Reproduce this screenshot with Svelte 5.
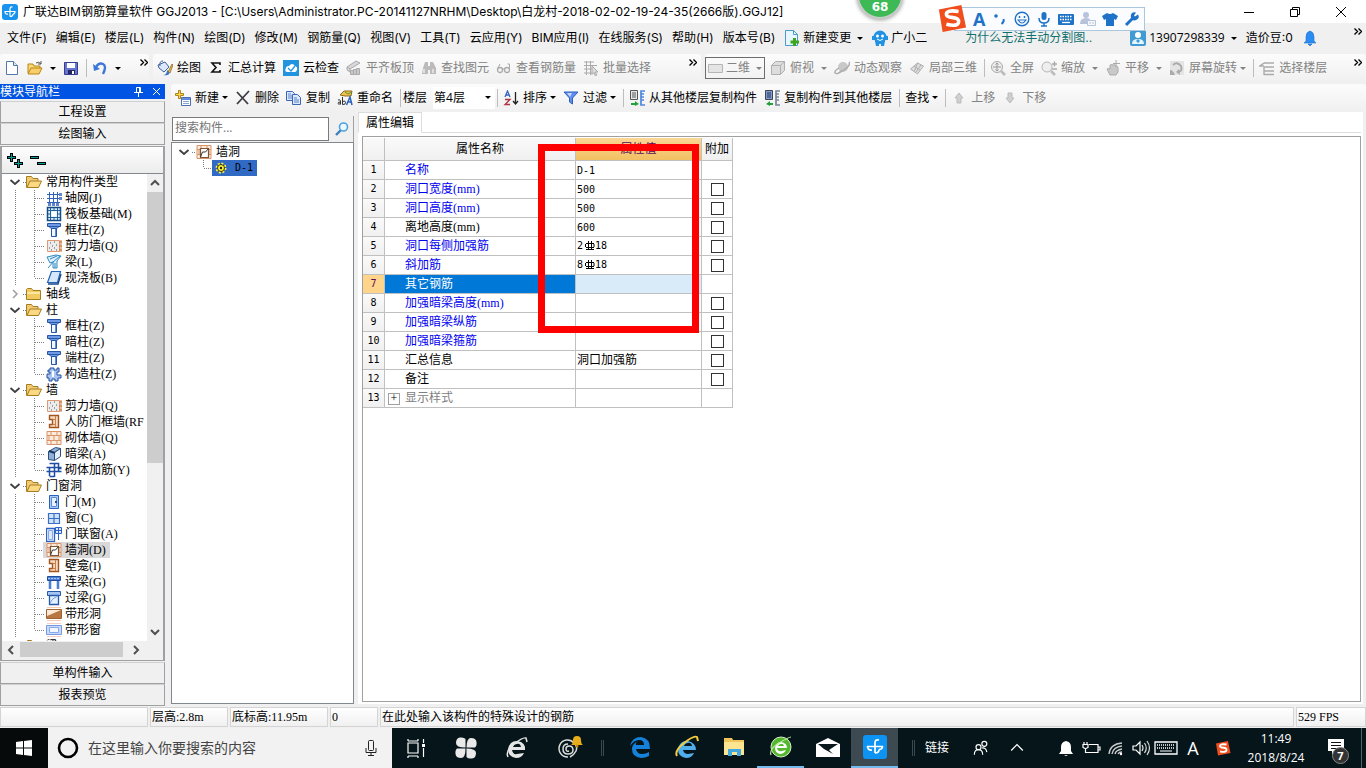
<script lang="ts">
	interface Tool {
		icon?: string;
		text?: string;
		arrow?: 'wide' | 'tight';
		sep?: boolean;
		off?: boolean;
		boxed?: boolean;
	}

	interface Prop {
		name: string;
		color?: string;
		value?: string;
		bar?: string[];
		check?: boolean;
	}

	const menus = ['文件(F)', '编辑(E)', '楼层(L)', '构件(N)', '绘图(D)', '修改(M)', '钢筋量(Q)', '视图(V)', '工具(T)', '云应用(Y)', 'BIM应用(I)', '在线服务(S)', '帮助(H)', '版本号(B)'];

	const drawTools: Tool[] = [
		{ icon: 'paint', text: '绘图' },
		{ icon: 'sum', text: '汇总计算' },
		{ icon: 'cloud', text: '云检查' },
		{ icon: 'align', text: '平齐板顶', off: true },
		{ icon: 'find', text: '查找图元', off: true },
		{ icon: 'glasses', text: '查看钢筋量', off: true },
		{ icon: 'batch', text: '批量选择', off: true }
	];

	const viewTools: Tool[] = [
		{ icon: 'rect', text: '二维', arrow: 'wide', off: true, boxed: true },
		{ icon: 'cube', text: '俯视', arrow: 'wide', off: true },
		{ icon: 'orbit', text: '动态观察', off: true },
		{ icon: 'part', text: '局部三维', off: true },
		{ sep: true },
		{ icon: 'full', text: '全屏', off: true },
		{ icon: 'zoom', text: '缩放', arrow: 'wide', off: true },
		{ icon: 'pan', text: '平移', arrow: 'wide', off: true },
		{ icon: 'rotate', text: '屏幕旋转', arrow: 'tight', off: true },
		{ sep: true },
		{ icon: 'floor', text: '选择楼层', off: true }
	];

	const editTools: Tool[] = [
		{ icon: 'add', text: '新建', arrow: 'tight' },
		{ icon: 'del', text: '删除' },
		{ icon: 'copy', text: '复制' },
		{ icon: 'rename', text: '重命名' },
		{ sep: true }
	];

	const floorTools: Tool[] = [
		{ sep: true },
		{ icon: 'sort', text: '排序', arrow: 'tight' },
		{ icon: 'filter', text: '过滤', arrow: 'tight' },
		{ sep: true },
		{ icon: 'copyfrom', text: '从其他楼层复制构件' },
		{ icon: 'copyto', text: '复制构件到其他楼层' },
		{ sep: true },
		{ text: '查找', arrow: 'tight' },
		{ sep: true },
		{ icon: 'up', text: '上移', off: true },
		{ icon: 'down', text: '下移', off: true }
	];

	const tree = [
		{ name: '常用构件类型', open: true, items: [['grid', '轴网(J)'], ['raft', '筏板基础(M)'], ['column', '框柱(Z)'], ['wall', '剪力墙(Q)'], ['beam', '梁(L)'], ['slab', '现浇板(B)']] },
		{ name: '轴线', open: false, items: [] },
		{ name: '柱', open: true, items: [['column', '框柱(Z)'], ['column', '暗柱(Z)'], ['column', '端柱(Z)'], ['tiecol', '构造柱(Z)']] },
		{ name: '墙', open: true, items: [['wall', '剪力墙(Q)'], ['niche', '人防门框墙(RF'], ['brick', '砌体墙(Q)'], ['hidden', '暗梁(A)'], ['rebarwall', '砌体加筋(Y)']] },
		{ name: '门窗洞', open: true, items: [['door', '门(M)'], ['window', '窗(C)'], ['doorwin', '门联窗(A)'], ['hole', '墙洞(D)'], ['niche', '壁龛(I)'], ['link', '连梁(G)'], ['lintel', '过梁(G)'], ['strip', '带形洞'], ['stripwin', '带形窗']] },
		{ name: '梁', open: false, items: [] }
	];

	let props: Prop[] = $state([
		{ name: '名称', color: 'blue', value: 'D-1' },
		{ name: '洞口宽度(mm)', color: 'blue', value: '500', check: false },
		{ name: '洞口高度(mm)', color: 'blue', value: '500', check: false },
		{ name: '离地高度(mm)', value: '600', check: false },
		{ name: '洞口每侧加强筋', color: 'blue', bar: ['2', '18'], check: false },
		{ name: '斜加筋', color: 'blue', bar: ['8', '18'], check: false },
		{ name: '其它钢筋' },
		{ name: '加强暗梁高度(mm)', color: 'blue', check: false },
		{ name: '加强暗梁纵筋', color: 'blue', check: false },
		{ name: '加强暗梁箍筋', color: 'blue', check: false },
		{ name: '汇总信息', value: '洞口加强筋', check: false },
		{ name: '备注', check: false },
		{ name: '显示样式', color: 'gray' }
	]);

	let selectedRow = $state(6);
	let selectedItem = $state('墙洞(D)');
	let search = $state('');
	let taskSearch = $state('');

	const bricks = '<path d="M1 1.500h14v13H1zM1 5.500h14M1 10.500h14M5 1.500v4M11 1.500v4M8 5.500v5M3 5.500v5M13 5.500v5M5 10.500v4M11 10.500v4" fill="#fdebdc" stroke="#d9936a"/>';

	const icons: Record<string, string> = {
		logo: '<rect width="16" height="16" rx="3" fill="#1a93ee"/><path d="M8 12.500V5q0-2.500 2.500-2M2.500 7.500h11M3 7.500q0 3 3 2.500M8 12.500q3 0 3-2.500M13 7.500q0 2.500-2 2.500" fill="none" stroke="#fff" stroke-width="1.200"/>',
		file: '<path d="M2.500 1.500h7l4 4v9h-11z" fill="#fff" stroke="#5377a8"/><path d="M9.500 1.500v4h4" fill="#dbe8fa" stroke="#5377a8"/>',
		open: '<path d="M1 13V4h5l1 2h6v2" fill="#f7d977" stroke="#b98414"/><path d="M1 14l3-6h11l-3 6z" fill="#f9cf6c" stroke="#b98414"/><path d="M9 3q3-2 5 1M14 1v3h-3" fill="none" stroke="#555"/>',
		save: '<path d="M1.500 2.500h13v12h-13z" fill="#6675cf" stroke="#353b93"/><path d="M4 3h8v5H4z" fill="#fff"/><path d="M5 10h7v4H5z" fill="#24275f"/><path d="M9 11h2v3H9z" fill="#fff"/>',
		undo: '<path d="M4 7q3-5 7-3t0 10" fill="none" stroke="#3d78d8" stroke-width="2.400"/><path d="M1 4l1 7 6-2z" fill="#3d78d8"/>',
		paint: '<path d="M1 5l7-3 4 5-5 5-5-4z" fill="#dbe8fb" stroke="#43609a"/><path d="M3 6q-1-5 3-5" fill="none" stroke="#43609a"/><path d="M11 12l4-8 1 1-3 8z" fill="#f1bb3c" stroke="#7a5d19" stroke-width=".7"/><path d="M6 15q4 0 4-5 3 2 2 4t-6 1z" fill="#3f74c8"/>',
		sum: '<path d="M12 5V3H4l4 4.500L4 12h8v-2" fill="none" stroke="#111" stroke-width="1.600"/>',
		cloud: '<rect width="16" height="16" fill="#2294df"/><path d="M4 12q-3-1-1-4 0-2 3-2 3-4 6 0 3 1 2 4-1 2-2 2z" fill="#fff"/><path d="M5 8l3 3 4-5" fill="none" stroke="#2294df" stroke-width="1.300"/>',
		align: '<path d="M1 7l9-6 4 2-10 6zM1 7v3l3 2V9" fill="#d8d8d8" stroke="#aaa"/><path d="M4.500 10.500h3v4h-3zM7.500 9.500h3v5h-3zM10.500 8.500h3v6h-3z" fill="#c8c8c8" stroke="#aaa"/>',
		find: '<path d="M2 8l2-6h3v12H1zM9 14V2h3l3 6v6zM7 6h2v4H7z" fill="#bbb"/><path d="M3 9v4M12 9v4" stroke="#eee" stroke-width="1.400"/>',
		glasses: '<circle cx="4" cy="10" r="2.500" fill="none" stroke="#aaa" stroke-width="1.300"/><circle cx="11" cy="10" r="2.500" fill="none" stroke="#aaa" stroke-width="1.300"/><path d="M1.500 9L4 4M6.500 9h2M13.500 9V4h-2" fill="none" stroke="#aaa"/>',
		batch: '<path d="M1 2h10M1 5.500h13M1 9h8M1 13h8M3.500 1v14M7.500 1v14" stroke="#aaa"/><path d="M9 6l6 6h-3l2 3-2 .5-1-3-2 2z" fill="#ddd" stroke="#aaa"/>',
		rect: '<path d="M1.500 4.500h14v8h-14z" fill="#e4e4e4" stroke="#b5b5b5"/>',
		cube: '<path d="M1.500 5.500l4-4h9v9l-4 4h-9zM1.500 5.500h9v9M10.500 5.500l4-4" fill="#ddd" stroke="#b0b0b0"/>',
		orbit: '<circle cx="9" cy="7" r="5" fill="#c8c8c8"/><path d="M15 2q2 3-5 8t-9 3q-1-2 4-5" fill="none" stroke="#aaa" stroke-width="1.400"/><path d="M3 14l5-4" stroke="#aaa"/>',
		part: '<path d="M1.500 9l7-6 6 3-6 8zM5 6l6 4M8.500 3l-3 8M12 5l-5 7" fill="#ddd" stroke="#b0b0b0"/>',
		full: '<circle cx="7" cy="7" r="5.500" fill="#eee" stroke="#aaa"/><path d="M7 3v8M3 7h8M5.500 4.500L7 3l1.500 1.500M5.500 9.500L7 11l1.500-1.500" fill="none" stroke="#999"/><path d="M11 11l4 4" stroke="#bbb" stroke-width="2.500"/>',
		zoom: '<circle cx="6" cy="7" r="5" fill="#eee" stroke="#b5b5b5"/><path d="M10 11l4 4" stroke="#bbb" stroke-width="2.500"/><path d="M11 4h5M13.500 1.500v5M11 9h5" stroke="#aaa" stroke-width="1.400"/>',
		pan: '<path d="M2 9q2-1 3 0V5q2-1 3 0 2-1 3 1 2 0 2 2v4l-2 3H5z" fill="#c9c9c9" stroke="#aaa"/><path d="M11 0v7M8 3.500h7" stroke="#aaa"/>',
		rotate: '<path d="M1 1h14v14H1z" fill="#e4e4e4"/><path d="M4 5q4-4 8 1 2 5-3 6" fill="none" stroke="#aaa" stroke-width="2"/><path d="M10 9l-3 3 4 3zM1 15V10q3 0 5 5z" fill="#aaa"/>',
		floor: '<path d="M5 3h10M5 7h10M5 11h10M5 14.500h10M5 3L1 6h4M5 7v8" fill="none" stroke="#aaa" stroke-width="1.400"/>',
		add: '<path d="M3.500 0.500h2v3h3v2h-3v3h-2v-3h-3v-2h3z" fill="#f9d64a" stroke="#a9841a"/><path d="M6.500 7.500h9v8h-9z" fill="#fff" stroke="#4f6fb5"/><path d="M7 8h8v2H7z" fill="#5f8be0"/><path d="M8 11.500h6M8 13.500h6" stroke="#8aa5d8"/>',
		del: '<path d="M2 2l11 12M14 1L2 14" stroke="#3c3c44" stroke-width="1.800"/>',
		copy: '<path d="M.5 1.500h6l2 2v7h-8z" fill="#dce8ff" stroke="#3b66b0"/><path d="M6.500 4.500h5l3 3v7h-8z" fill="#dce8ff" stroke="#3b66b0"/><path d="M8 8h3M8 10h5M8 12h5M2 4h3M2 6h4M2 8h4" stroke="#5a83c8"/>',
		rename: '<path d="M3 5l4-4h8l-1 5H8z" fill="#efc34c" stroke="#8d6b1c"/><path d="M8 2l3 2 4-2" fill="none" stroke="#5c8a3a"/><path d="M9.500 15l3.500-8 2 8M11 12h4" fill="none" stroke="#2a62c0" stroke-width="1.500"/><path d="M1 10q2-1 2.500 1v3.500M3.500 12q-3 0-2.500 1.500t2.500 0M5.500 7v7.500q3 .5 3-2t-3-1" fill="none" stroke="#333"/>',
		sort: '<path d="M2 7l2.500-6L7 7M3 5h3" fill="none" stroke="#3765bf" stroke-width="1.300"/><path d="M2 9.500h5l-5 5h5" fill="none" stroke="#b03544" stroke-width="1.300"/><path d="M12.500 2v12M10 11l2.500 3 2.500-3" fill="none" stroke="#222" stroke-width="1.300"/>',
		filter: '<path d="M1 2h14l-5.500 6v6L6.500 12V8z" fill="#5d8ff0" stroke="#2f5ec0"/><path d="M4 3h5l-2 4z" fill="#c8dbff"/>',
		copyfrom: '<path d="M1.500.5h7v9h-7z" fill="#e8e8e8" stroke="#555"/><path d="M3 3h4M3 5h4M3 7h4" stroke="#555"/><path d="M16 1h-4v14h4M15 4h-3M15 7h-3M15 10h-3" fill="none" stroke="#4f86dd" stroke-width="1.700"/><path d="M2 11v2h4v-2l4 3-4 2v-1H2z" fill="#24a03a"/>',
		copyto: '<path d="M1.500.5h7v9h-7z" fill="#7f9fdc" stroke="#444"/><path d="M3 3h4M3 5h4M3 7h4" stroke="#234"/><path d="M16 1h-4v14h4M15 4h-3M15 7h-3M15 10h-3" fill="none" stroke="#7a8598" stroke-width="1.700"/><path d="M9 11v2H6v-2l-4 3 4 2v-1h3z" fill="#24a03a"/>',
		up: '<path d="M8 3l4 5h-2v5H6V8H4z" fill="#d0d0d0" stroke="#bbb"/>',
		down: '<path d="M8 13l4-5h-2V3H6v5H4z" fill="#d0d0d0" stroke="#bbb"/>',
		change: '<path d="M1.500.5h8l4 4v11h-12z" fill="#e8f6ff" stroke="#4a9bcc"/><path d="M9.500.5v4h4" fill="none" stroke="#4a9bcc"/><path d="M9 8h3v2.500h3v3h-3V16H9v-2.500H6.500v-3H9z" fill="#3da51e"/>',
		robot: '<circle cx="8" cy="7" r="6.500" fill="#2191e4"/><path d="M3 11h10l-1 5h-3v-2H7v2H4zM0 6h3v4H0zM13 6h3v4h-3z" fill="#2191e4"/><circle cx="5.500" cy="6" r="1.500" fill="#fff"/><circle cx="10.500" cy="6" r="1.500" fill="#fff"/><path d="M5 9q3 3 6 0" fill="none" stroke="#fff"/>',
		user: '<rect width="16" height="16" rx="2" fill="#3f9bd1"/><circle cx="8" cy="5" r="3" fill="#fff"/><path d="M2 14q0-5 6-5t6 5z" fill="#e6f4fc"/><path d="M8 9l2 2-2 2-2-2z" fill="#3f9bd1"/>',
		bell: '<path d="M8 1q4 1 4 6v4l2 2H2l2-2V7q0-5 4-6zM6 14h4l-2 2z" fill="#2b8df2" stroke="#1a6ed0" stroke-width=".6"/>',
		folder: '<path d="M.5 13.500v-10l1-1h4l1.500 2h7.500v9z" fill="#f0cb62" stroke="#a67c22"/><path d="M1 6h13v2H1z" fill="#fae6a0"/>',
		folderopen: '<path d="M.5 13.500v-11h5l1.500 2h5v3" fill="#f0cb74" stroke="#a67c22"/><path d="M1 13.500L4 7h11.500l-3 6.500z" fill="#fbd982" stroke="#a67c22"/>',
		grid: '<path d="M1 4.500h13M1 8.500h13M1 12.500h13M3.500 2v12M7.500 2v12M11.500 2v12" stroke="#2f62bc"/><path d="M2 13h3v3H2zM6 13h3v3H6zM10 13h3v3h-3zM13 3h3v3h-3zM13 7h3v3h-3z" fill="#5f86cc"/>',
		raft: '<path d="M1.500 1.500h13v13h-13z" fill="#d8efff" stroke="#174b84" stroke-width="1.500"/><path d="M5.500 5.500h5v5h-5z" fill="#fff"/><path d="M4.500 2v12M11.500 2v12M2 4.500h12M2 11.500h12" fill="none" stroke="#235e9a"/><path d="M8 2v2M8 12v2M2 8h2M12 8h2" stroke="#235e9a"/>',
		column: '<path d="M1.500 1.500h13v3h-13zM3 4.500h10l-2 2H5z" fill="#6f9be4" stroke="#2856a6"/><path d="M5.500 6.500h5v8h-5z" fill="#f2f7ff" stroke="#2856a6"/><path d="M9 7h1v7H9z" fill="#5e8ee0"/>',
		wall: '<path d="M1.500 2.500h12v11h-12z" fill="#ececec" stroke="#e09a73"/><path d="M4 5h1M8 4h1M6 8h1M10 7h1M3 10h1M8 10h1M5 12h1M10 12h1" stroke="#555"/><path d="M15 2v12M13 4h3M13 8h3M13 12h3" stroke="#c87435"/>',
		beam: '<path d="M1 3l9-2 5 1-4 5v7H7V8L4 9z" fill="#dcefff" stroke="#3289c4"/><path d="M4 5l7-3M7 8l7-6M2 14l6-7M9 9v5" stroke="#3289c4"/>',
		slab: '<path d="M5.500 1.500h9l-3 11h-10z" fill="#d4e7fb" stroke="#2463b5" stroke-width="1.200"/><path d="M2 14h10l3-10" fill="none" stroke="#17458a" stroke-width="1.400"/>',
		tiecol: '<path d="M4 2h4v2h3V2h2v4h-2v3h4v3h-3v3H9v-2H6v2H3v-3H1V8h3V6H2V4h2z" fill="#a9c6f2" stroke="#1f4f9c"/><path d="M7 5v6" stroke="#fff" stroke-width="2"/>',
		niche: '<path d="M3.500 1.500h9v12h-9v-3h3v-5h-3z" fill="#f8dcc4" stroke="#a5541d" stroke-width="1.400"/><path d="M9.500 2v11M6.500 5.500h3M6.500 10.500h3" stroke="#c8804f"/>',
		brick: bricks,
		hidden: '<path d="M2.500 5.500l7-4 5 1-6 4v8l-6-1z" fill="#8fb1d9" stroke="#2d4d7a"/><path d="M8.500 6.500v8l6-4v-8z" fill="#e6f0fa" stroke="#2d4d7a"/><path d="M3 5l6 2" stroke="#16365e" stroke-width="2"/>',
		rebarwall: '<path d="M3.500 1.500h9v5h3M.5 5.500h15M.5 9.500h15M3.500 5v9M8.500 1v14M12.500 5v5M3.500 14.500h5" fill="none" stroke="#1d4da5" stroke-width="1.500"/>',
		door: '<path d="M3.500 1.500h9v13h-9z" fill="#a9caf6" stroke="#2c62b6"/><path d="M5.500 3.500h5v9h-5z" fill="#e8f2ff" stroke="#5d8dd8"/><path d="M9 8h2" stroke="#1c4a95" stroke-width="2"/>',
		window: '<path d="M2.500 3.500h11v10h-11zM8 3v11M2 8.500h12" fill="#cfe2fc" stroke="#3a70c4" stroke-width="1.200"/>',
		doorwin: '<path d="M.5 2.500h8v13h-8z" fill="#f2f7ff" stroke="#2c62c6" stroke-width="1.300"/><path d="M2.500 4.500h4v9h-4z" fill="#dbe8fd" stroke="#87a8e4"/><path d="M9.500 1.500h6v6h-6zM12.500 1v13M9 4.500h7" fill="#dbe8fd" stroke="#2c62c6"/>',
		hole: bricks + '<path d="M4.500 4.500h8v9h-8z" fill="#fff" stroke="#7d5638" stroke-width="1.200"/><path d="M4.500 13l2-5h3l3-3.500" fill="none" stroke="#3d342d"/>',
		link: '<path d="M1.500 2.500h13v4h-13z" fill="#4c80d6" stroke="#1f4b99"/><path d="M2 4.500h12" stroke="#a9c8f5" stroke-dasharray="2 1"/><path d="M4 7v8M12 7v8" stroke="#4c80d6" stroke-width="2.600"/>',
		lintel: '<path d="M1.500 1.500h13v4h-13z" fill="#a7c5f3" stroke="#2558aa"/><path d="M3.500 5.500h9v9h-9z" fill="#e4efff" stroke="#2558aa" stroke-width="1.300"/><path d="M4 13q2-5 8-7" fill="none" stroke="#7ba5e4"/>',
		strip: '<path d="M.5 3.500h15v9H.5z" fill="#fce9d8" stroke="#a0622f"/><path d="M1 10l14-6v8H1z" fill="#b87642"/><path d="M1 1.500h14M1 14.500h14" stroke="#f5c9b6"/>',
		stripwin: '<path d="M.5 3.500h15v9H.5z" fill="#c8dafb" stroke="#7898e2"/><path d="M3.500 5.500h9v5h-9z" fill="#f2f7ff" stroke="#8aa9ea"/><path d="M1 1.500h14M1 14.500h14" stroke="#f7cfc0"/>',
		gear: '<circle cx="8" cy="8" r="4.500" fill="none" stroke="#fff03a" stroke-width="2" stroke-dasharray="2 1.500"/><circle cx="8" cy="8" r="3.500" fill="#fff03a" stroke="#3c3a00"/><circle cx="8" cy="8" r="1.200" fill="#222"/>',
		lens: '<circle cx="9.500" cy="6" r="4" fill="#eef8ff" stroke="#4aa2de" stroke-width="1.600"/><path d="M6.500 9.500L2 14" stroke="#3c7fba" stroke-width="2.400"/>',
		sogou: '<path d="M1 3.500L13 1l2.500 12L3 15.500z" fill="#f04e1c"/><path d="M11.500 4.500Q5 3.500 5 6q0 1.500 3.500 1.800t3 2.500q-.5 2.500-6.500 1" fill="none" stroke="#fff" stroke-width="1.900"/>',
		mic: '<rect x="5.500" y="1" width="5" height="8" rx="2.500" fill="#1e73c8"/><path d="M3 7q0 5 5 5t5-5M8 12v3M5 15h6" fill="none" stroke="#1e73c8" stroke-width="1.500"/>',
		smile: '<circle cx="8" cy="8" r="6.800" fill="none" stroke="#1e73c8" stroke-width="1.400"/><path d="M5.500 5v2M10.500 5v2" stroke="#1e73c8" stroke-width="1.500"/><path d="M4 9q4 6 8 0z" fill="none" stroke="#1e73c8" stroke-width="1.200"/>',
		comma: '<circle cx="4" cy="5" r="1.800" fill="#1e73c8"/><path d="M11.500 8q1 3-2 5" fill="none" stroke="#1e73c8" stroke-width="1.900"/>',
		keys: '<rect y="3" width="16" height="11" rx="1" fill="#1e73c8"/><path d="M2 5.500h12M2 8.500h12" stroke="#fff" stroke-width="1.500" stroke-dasharray="1.500 1"/><path d="M4 11.500h8" stroke="#fff" stroke-width="1.300"/>',
		person: '<circle cx="6" cy="4" r="3" fill="#b7c3da"/><path d="M0 13q0-6 6-6 4 0 4 2v4z" fill="#b7c3da"/><path d="M7.500 9.500h8v5h-8z" fill="#f4f7fb" stroke="#b7c3da"/><path d="M9 12h2M12 12h2" stroke="#b7c3da"/>',
		shirt: '<path d="M5 2q3 2 6 0l5 3-2 4-2-1v7H4V8L2 9 0 5z" fill="#1e73c8"/>',
		wrench: '<path d="M2 14l7-7" stroke="#1e73c8" stroke-width="3"/><path d="M14 3.500l-3 2-1-1 2-3q-4-1-5 2t1 5 5 0 1-5z" fill="#1e73c8"/>'
	};

	const task: Record<string, string> = {
		view: '<path d="M4 7h10v10H4zM4 3v2M14 3v2M4 5h10M4 20v2M14 20v2M4 20h10M19.500 3v4M19.500 12v9" fill="none" stroke="#fff" stroke-width="1.200"/><path d="M18 8h3v3h-3z" fill="#fff"/>',
		pinwheel: '<path d="M11.500 11.500V3Q10 1 6 1.500T2 7q0 4.500 9.500 4.500zM12.500 11.500H21q2-1.500 1.500-5.500T17 2q-4.500 0-4.500 9.500zM12.500 12.500V21q1.500 2 5.500 1.500t4-5.500q0-4.500-9.500-4.500zM11.500 12.500H3Q1 14 1.500 18T7 22q4.500 0 4.500-9.500z" fill="#e9e9e9"/>',
		ie: '<path d="M20 14H7q1 5 5 4l7-1q-2 5-8 5-8-1-8-9 2-9 10-8 8 2 7 9zM8 11h8q-1-4-4-3-3 0-4 3z" fill="#e5e5e5"/><path d="M3 21q-3-6 6-13T21 2l1 4" fill="none" stroke="#e5e5e5" stroke-width="1.500"/>',
		spiral: '<path d="M12 21a8.500 8.500 0 1 1 6-14M12 8q-5 0-5 5t5 5q5 0 5-4t-4-4q-3 0-3 3t3 2M18 7q4 4 2 8t-6 6" fill="none" stroke="#ddd" stroke-width="1.500"/><path d="M15 9q2-1 2-5 0-4 4-4t4 4q0 4 2 5z" fill="#e7ae19"/><circle cx="21" cy="10" r="1.500" fill="#c58609"/>',
		edge: '<path d="M22 14H8q1 5 6 5 4 0 7-2v4q-4 2-8 2-9-1-9-9 0-5 6-8-3 2-2 4h8q0-5-5-5T2 11Q4 2 13 2q9 1 9 12z" fill="#1681da"/>',
		iecolor: '<path d="M21 15H8q1 4 5 4l6-1q-2 5-8 5-8-1-8-9 2-9 10-8 8 2 8 9zM9 11h8q-1-4-4-3-3 0-4 3z" fill="#4fafec"/><path d="M2 21q-3-5 7-13T22 2l1 4" fill="none" stroke="#f4cc3d" stroke-width="2"/>',
		explorer: '<path d="M2 3h8l1 2h11v15H2z" fill="#f2c45c"/><path d="M2 7h20v13H2z" fill="#fde490"/><path d="M6 21v-7h13v7h-4v-4h-5v4z" fill="#41a8e0"/>',
		green: '<circle cx="12" cy="12" r="10" fill="#54b82d" stroke="#d7efcc"/><path d="M18 13H8q1 4 5 3l4-1q-2 4-6 4-5-1-5-6 1-6 6-6 6 1 6 6zM9 11h6q-1-3-3-2-2 0-3 2z" fill="#fff"/><path d="M2 20Q0 14 10 8t12-6" fill="none" stroke="#bde89f" stroke-width="1.200"/>',
		mail: '<path d="M0 9l12-6 12 6v13H0z" fill="#fff"/><path d="M2 9h20l-9 6 4 4-9-5z" fill="#0a181d"/>',
		app: '<rect x="0" y="0" width="24" height="24" rx="3" fill="#0d93f2"/><path d="M12 18V8q0-4 4-3M4 11.500h16M4.500 11q0 4.500 4.500 4M12 18q4 0 4-3.500M19.500 11q0 3.500-3.500 3.500" fill="none" stroke="#fff" stroke-width="1.700"/>',
		people: '<circle cx="9" cy="11" r="3" fill="none" stroke="#fff" stroke-width="1.400"/><path d="M4 20q0-6 5-6t5 6M13 12q5-1 6 5" fill="none" stroke="#fff" stroke-width="1.400"/><circle cx="16" cy="7" r="3" fill="none" stroke="#fff" stroke-width="1.400"/>',
		chev: '<path d="M5 15l7-7 7 7" fill="none" stroke="#fff" stroke-width="1.500"/>',
		ring: '<path d="M12 5q5 1 5 6v4l2 3H5l2-3v-4q0-5 5-6zM10 19h4l-2 1z" fill="#fff"/>',
		battery: '<path d="M10 8.500h9v8H9M19 11h2v3h-2M5 6v2M8 6v2M4 8.500h5v3l-2 1h-1l-2-1zM6.500 12.500v4h3" fill="none" stroke="#fff" stroke-width="1.200"/>',
		wifi: '<path d="M5 18Q6 8 18 7M8 18q1-7 10-8M11 18q1-4 7-5M14 18q1-2 4-2" fill="none" stroke="#ccc" stroke-width="1.400"/><circle cx="17" cy="18" r="1.200" fill="#fff"/>',
		volume: '<path d="M4 10h3l4-4v12l-4-4H4z" fill="none" stroke="#fff" stroke-width="1.200"/><path d="M13 9q2 3 0 6M15.500 7q3.500 5 0 10M18 5q5 7 0 14" fill="none" stroke="#ddd" stroke-width="1.200"/>',
		keyboard: '<path d="M1 6h22v12H1z" fill="none" stroke="#fff" stroke-width="1.300"/><path d="M3 9h18M3 12h18" stroke="#fff" stroke-width="1.300" stroke-dasharray="1 1"/><path d="M6 15h12" stroke="#fff"/>',
		note: '<path d="M2 3h16v12h-8l-4 4v-4H2z" fill="#fff"/><path d="M5 6.500h10M5 9.500h10M5 12.500h6" stroke="#111"/>'
	};

	const pinned = ['view', 'pinwheel', 'ie', 'spiral'];
	const running = ['edge', 'iecolor', 'explorer', 'green', 'mail', 'app'];
	const tray = ['ring', 'battery', 'wifi', 'volume', 'keyboard'];
	const ime = ['comma', 'smile', 'mic', 'keys', 'person', 'shirt', 'wrench'];
</script>

{#snippet icon(name: string)}
	<svg class="icon" viewBox="0 0 16 16" aria-hidden="true">{@html icons[name]}</svg>
{/snippet}

{#snippet taskIcon(name: string)}
	<svg class="task-icon" viewBox="0 0 24 24" aria-hidden="true">{@html task[name]}</svg>
{/snippet}

{#snippet more()}
	<button class="more" aria-label="更多">
		<svg width="8" height="7" viewBox="0 0 8 7"><path d="M.5.5l3 3-3 3M4.500.5l3 3-3 3" fill="none" stroke="#000" stroke-width="1.400" /></svg>
	</button>
{/snippet}

{#snippet tools(list: Tool[])}
	{#each list as t}
		{#if t.sep}
			<span class="sep"></span>
		{:else}
			<button class="tool" class:boxed={t.boxed} disabled={t.off}>
				{#if t.icon}{@render icon(t.icon)}{/if}
				<span>{t.text}</span>
				{#if t.arrow}<i class="arrow {t.arrow}"></i>{/if}
			</button>
		{/if}
	{/each}
{/snippet}

<div class="app">
	<header class="title">
		{@render icon('logo')}
		<h1>广联达BIM钢筋算量软件 GGJ2013 - [C:\Users\Administrator.PC-20141127NRHM\Desktop\白龙村-2018-02-02-19-24-35(2666版).GGJ12]</h1>
		<div class="win">
			<button aria-label="最小化"><svg width="12" height="12"><path d="M1 6.500h10" stroke="#000" /></svg></button>
			<button aria-label="还原"><svg width="12" height="12"><path d="M1.500 3.500h7v7h-7zM3.500 3.500v-2h7v7h-2" fill="none" stroke="#000" /></svg></button>
			<button aria-label="关闭"><svg width="12" height="12"><path d="M1 1l10 10M11 1L1 11" stroke="#000" /></svg></button>
		</div>
	</header>

	<nav class="menu">
		{#each menus as m}
			<button>{m}</button>
		{/each}
		<button class="with-icon">{@render icon('change')}新建变更<i class="arrow wide"></i></button>
		<button class="with-icon">{@render icon('robot')}广小二</button>
		<a class="news" href="#news">为什么无法手动分割图..</a>
		<button class="with-icon account">{@render icon('user')}13907298339<i class="arrow wide"></i></button>
		<button>造价豆:0</button>
		<button class="with-icon" aria-label="消息">{@render icon('bell')}</button>
		{@render more()}
	</nav>

	<div class="bar">
		<div class="group files">
			<button class="tool" aria-label="新建">{@render icon('file')}</button>
			<button class="tool" aria-label="打开">{@render icon('open')}<i class="arrow wide"></i></button>
			<button class="tool" aria-label="保存">{@render icon('save')}</button>
			<span class="sep"></span>
			<button class="tool" aria-label="撤销">{@render icon('undo')}<i class="arrow wide"></i></button>
			{@render more()}
		</div>
		<div class="group draw">{@render tools(drawTools)}{@render more()}</div>
		<div class="group view">{@render tools(viewTools)}{@render more()}</div>
	</div>

	<div class="main">
		<aside class="modules">
			<div class="panel-title">
				<span>模块导航栏</span>
				<button aria-label="固定"><svg width="9" height="10"><path d="M2.500.5h4v5h-4zM0 5.500h9M4.500 6v4M5.500 1v4" fill="none" stroke="#fff" /></svg></button>
				<button aria-label="关闭"><svg width="9" height="10"><path d="M1 1l7 7M8 1L1 8" stroke="#fff" /></svg></button>
			</div>
			<button class="section">工程设置</button>
			<button class="section">绘图输入</button>
			<div class="tree-box">
				<div class="tree-tools">
					<button aria-label="展开"><svg width="16" height="15"><path d="M4.500 0v9M0 4.500h9M11.500 6v9M7 10.500h9" stroke="#000" stroke-width="3" /><path d="M4.500 1v7M1 4.500h7M11.500 7v7M8 10.500h7" stroke="#00a09a" /></svg></button>
					<button aria-label="折叠"><svg width="16" height="15"><path d="M0 4.500h9M7 10.500h9" stroke="#000" stroke-width="3" /><path d="M1 4.500h7M8 10.500h7" stroke="#00a09a" /></svg></button>
				</div>
				<div class="scroll">
					<ul class="tree">
						{#each tree as g}
							<li>
								<button class="node">
									<svg width="23" height="16">
										{#if g.open}
											<path d="M7.500 6l4.500 4 4.500-4" fill="none" stroke="#404040" stroke-width="1.800" />
										{:else}
											<path d="M10 4l4 4-4 4" fill="none" stroke="#a0a0a0" stroke-width="1.500" />
										{/if}
										<path d="M20 8.500h3" stroke="#808080" stroke-dasharray="1 1" />
									</svg>
									{@render icon(g.open ? 'folderopen' : 'folder')}
									<span>{g.name}</span>
								</button>
								{#if g.open}
									<ul>
										{#each g.items as [ic, label], i}
											<li>
												<button class="node" onclick={() => (selectedItem = label)}>
													<svg width="43" height="16">
														<path d="M12.500 0v16M31.500 0v{i === g.items.length - 1 ? 8 : 16}M32 8.500h10" stroke="#808080" stroke-dasharray="1 1" />
													</svg>
													<span class="leaf" class:selected={label === selectedItem}>{@render icon(ic)}<span>{label}</span></span>
												</button>
											</li>
										{/each}
									</ul>
								{/if}
							</li>
						{/each}
					</ul>
					<div class="vscroll">
						<svg width="16" height="18"><path d="M4 11l4-4 4 4" fill="none" stroke="#505050" stroke-width="2" /></svg>
						<div class="thumb"></div>
						<svg width="16" height="18"><path d="M4 7l4 4 4-4" fill="none" stroke="#505050" stroke-width="2" /></svg>
					</div>
				</div>
				<div class="hscroll">
					<svg width="18" height="16"><path d="M11 4L7 8l4 4" fill="none" stroke="#505050" stroke-width="2" /></svg>
					<div class="thumb"></div>
					<svg width="18" height="16"><path d="M3 4l4 4-4 4" fill="none" stroke="#505050" stroke-width="2" /></svg>
				</div>
			</div>
			<button class="section">单构件输入</button>
			<button class="section">报表预览</button>
		</aside>

		<div class="work">
			<div class="group edit">
				{@render tools(editTools)}
				<label for="floor">楼层</label>
				<span class="combo">
					<select id="floor"><option>第4层</option></select>
					<i class="arrow"></i>
				</span>
				{@render tools(floorTools)}
			</div>

			<div class="panes">
				<section class="parts">
					<div class="search">
						<input type="text" placeholder="搜索构件..." aria-label="搜索构件" bind:value={search} />
						<button aria-label="搜索">{@render icon('lens')}</button>
					</div>
					<ul class="part-tree">
						<li class="part-root">
							<svg width="24" height="16"><path d="M7.500 6l4.500 4 4.500-4" fill="none" stroke="#404040" stroke-width="1.800" /><path d="M20 8.500h4" stroke="#808080" stroke-dasharray="1 1" /></svg>
							{@render icon('hole')}
							<span>墙洞</span>
						</li>
						<li class="part-leaf">
							<svg width="40" height="16"><path d="M31.500 0v8M32 8.500h8" stroke="#808080" stroke-dasharray="1 1" /></svg>
							<button>{@render icon('gear')}<span class="num">D-1</span></button>
						</li>
					</ul>
				</section>

				<section class="editor">
					<div class="tabs"><button class="tab">属性编辑</button></div>
					<div class="sheet">
						<table>
							<thead>
								<tr><th class="idx" aria-label="序号"></th><th class="name">属性名称</th><th class="value">属性值</th><th class="extra">附加</th></tr>
							</thead>
							<tbody>
								{#each props as p, i}
									<tr class:current={i === selectedRow} onclick={() => (selectedRow = i)}>
										<th class="idx num">{i + 1}</th>
										<td class="name {p.color ?? ''}">
											{#if p.color === 'gray'}<button class="plus" aria-label="展开">+</button>{/if}{p.name}
										</td>
										<td class="value">
											{#if p.bar}
												<span class="num bars">{p.bar[0]}<svg width="12" height="10"><path d="M5.500 0v9M8.500 0v9M3 8.500h8M2.500 3v3M11 3v3M3 2.500h8M3 6.500h8" fill="none" stroke="#000" /></svg>{p.bar[1]}</span>
											{:else if p.value}
												<span class:num={p.value.length < 4}>{p.value}</span>
											{/if}
										</td>
										<td class="extra">
											{#if p.check !== undefined}<input type="checkbox" aria-label={p.name} bind:checked={p.check} />{/if}
										</td>
									</tr>
								{/each}
							</tbody>
						</table>
						<div class="marker"></div>
					</div>
				</section>
			</div>
		</div>
	</div>

	<footer class="status">
		<span class="s-blank"></span>
		<span class="s-height">层高:2.8m</span>
		<span class="s-base">底标高:11.95m</span>
		<span class="s-count">0</span>
		<span class="s-hint">在此处输入该构件的特殊设计的钢筋</span>
		<span class="s-fps">529 FPS</span>
	</footer>

	<div class="taskbar">
		<button class="start" aria-label="开始"><svg width="16" height="16"><path d="M0 2l7-1v6.500H0zM8 1l8-1v7.500H8zM0 8.500h7V15l-7-1zM8 8.500h8V16l-8-1z" fill="#fff" /></svg></button>
		<div class="cortana">
			<svg width="22" height="22"><circle cx="11" cy="11" r="9" fill="none" stroke="#000" stroke-width="2.600" /></svg>
			<input type="text" placeholder="在这里输入你要搜索的内容" aria-label="搜索" bind:value={taskSearch} />
			<svg width="12" height="18"><rect x="3.500" y="1.500" width="5" height="10" rx="1" fill="none" stroke="#222" /><path d="M1 9v4.500h10V9M6 14v3M3 16.500h6" fill="none" stroke="#222" /></svg>
		</div>
		{#each pinned as p}
			<button class="pinned {p}" aria-label={p}>{@render taskIcon(p)}</button>
		{/each}
		<span class="grip"></span>
		{#each running as r}
			<button class="running {r}" aria-label={r}>{@render taskIcon(r)}</button>
		{/each}
		<span class="grip last"></span>
		<span class="links">链接</span>
		<div class="tray">
			<button class="t-wide" aria-label="人脉">{@render taskIcon('people')}</button>
			<button class="t-wide t-more" aria-label="显示隐藏的图标">{@render taskIcon('chev')}</button>
			{#each tray as t}
				<button class="t-item" aria-label={t}>{@render taskIcon(t)}</button>
			{/each}
			<span class="t-ime">A</span>
			<button class="t-sogou" aria-label="搜狗">{@render icon('sogou')}</button>
			<div class="clock"><span>11:49</span><span>2018/8/24</span></div>
			<button class="notice" aria-label="通知">{@render taskIcon('note')}<b>7</b></button>
			<span class="desktop"></span>
		</div>
	</div>

	<div class="ball">68</div>
	<div class="ime">
		<svg class="ime-logo" viewBox="0 0 16 16">{@html icons.sogou}</svg>
		<b>A</b>
		{#each ime as n}
			{@render icon(n)}
		{/each}
	</div>
</div>

<style>
	:global(body) {
		background: #f0f0f0;
	}

	.app {
		position: relative;
		display: flex;
		flex-direction: column;
		height: 100vh;
		min-height: 480px;
		overflow: hidden;
		background: #f0f0f0;
		color: #000;
		font: 12px/16px 'Open Sans', 'Noto Sans CJK SC', sans-serif;
		white-space: nowrap;
	}

	.app * {
		box-sizing: border-box;
	}

	button,
	input,
	select {
		padding: 0;
		border: 0;
		background: none;
		color: inherit;
		font: inherit;
	}

	ul {
		margin: 0;
		padding: 0;
		list-style: none;
	}

	svg {
		display: block;
		flex: none;
	}

	.icon {
		width: 16px;
		height: 16px;
	}

	.title {
		display: flex;
		align-items: center;
		flex: none;
		gap: 5px;
		height: 23px;
		padding: 0 2px;
		background: #fff;
	}

	.title h1 {
		flex: 1;
		margin: 0;
		font-family: Inter, 'Noto Sans CJK SC', sans-serif;
		font-size: 12px;
		font-weight: 400;
	}

	.win {
		display: flex;
	}

	.win button {
		display: flex;
		justify-content: center;
		width: 46px;
	}

	.menu {
		display: flex;
		align-items: center;
		flex: none;
		gap: 9px;
		height: 30px;
		margin-bottom: 1px;
		padding: 0 4px 0 7px;
		font-family: Inter, 'Noto Sans CJK SC', sans-serif;
	}

	.with-icon {
		display: flex;
		align-items: center;
		gap: 3px;
	}

	.account {
		font-family: 'Open Sans', sans-serif;
	}

	.news {
		margin: 0 29px;
		color: #10706f;
		text-decoration: none;
	}

	.more {
		display: flex;
		align-self: flex-start;
		flex: none;
		margin: 5px 0 0 auto;
	}

	.arrow {
		flex: none;
		width: 5px;
		border: solid transparent;
		border-width: 3px 3px 0;
		border-top-color: currentColor;
	}

	.arrow.wide {
		margin-left: 3px;
	}

	.arrow.tight {
		margin-left: -1px;
	}

	.bar {
		display: flex;
		flex: none;
		gap: 4px;
		height: 30px;
	}

	.group {
		display: flex;
		align-items: center;
		gap: 7px;
		height: 28px;
		padding: 0 4px;
		border-radius: 3px;
		background: linear-gradient(#fcfcfc, #f0f0f0);
	}

	.files {
		width: 149px;
		padding-right: 1px;
	}

	.draw {
		width: 548px;
	}

	.view {
		flex: 1;
		padding-left: 0;
	}

	.tool {
		display: flex;
		align-items: center;
		gap: 4px;
	}

	.tool:disabled {
		color: #838383;
	}

	.tool.boxed {
		gap: 3px;
		height: 22px;
		margin-right: -2px;
		padding: 0 2px 0 1px;
		border: 1px solid #6d6d6d;
	}

	.sep {
		width: 1px;
		height: 18px;
		margin-right: -2px;
		background: #bdbdbd;
	}

	.main {
		display: flex;
		flex: 1;
		gap: 6px;
		min-height: 0;
	}

	.modules {
		display: flex;
		flex-direction: column;
		flex: none;
		width: 165px;
		font-family: 'Liberation Serif', 'Noto Sans CJK SC', serif;
	}

	.panel-title {
		display: flex;
		align-items: center;
		gap: 9px;
		height: 15px;
		margin-bottom: 2px;
		padding-right: 4px;
		background: #0054e3;
		color: #fff;
	}

	.panel-title span {
		flex: 1;
	}

	.section {
		flex: none;
		height: 22px;
		border: 1px solid #a0a0a0;
		border-top-color: #d0d0d0;
		background: #f0f0f0;
		text-align: center;
	}

	.tree-box {
		display: flex;
		flex-direction: column;
		flex: 1;
		min-height: 0;
		margin: 1px 0;
		border: 2px solid #a0a0a0;
		border-width: 1px 2px;
	}

	.tree-tools {
		display: flex;
		align-items: center;
		flex: none;
		gap: 7px;
		height: 27px;
		padding-left: 5px;
		border-bottom: 1px solid #828790;
		background: linear-gradient(#fdfdfd, #ececec);
	}

	.scroll {
		display: flex;
		flex: 1;
		min-height: 0;
		background: #fff;
	}

	.tree {
		flex: 1;
		min-width: 0;
		overflow: hidden;
		padding-left: 1px;
	}

	.node {
		display: flex;
		height: 16px;
	}

	.node > span:last-child,
	.part-root span {
		padding-left: 4px;
	}

	.node > .leaf:last-child {
		display: flex;
		gap: 3px;
		margin-left: -3px;
		padding: 0 4px 0 3px;
	}

	.leaf.selected {
		background: #d9d9d9;
	}

	.vscroll {
		display: flex;
		flex-direction: column;
		flex: none;
		width: 16px;
		background: #f0f0f0;
	}

	.vscroll .thumb {
		height: 58%;
		margin: 0 0 auto;
		background: #cdcdcd;
	}

	.hscroll {
		display: flex;
		align-items: center;
		flex: none;
		height: 19px;
		padding-bottom: 2px;
		background: #f0f0f0;
	}

	.hscroll .thumb {
		flex: none;
		width: 64%;
		height: 15px;
		margin-right: 8px;
		background: #cdcdcd;
	}

	.work {
		display: flex;
		flex-direction: column;
		flex: 1;
		min-width: 0;
	}

	.edit {
		flex: none;
		height: 27px;
	}

	.edit label {
		margin-left: -3px;
	}

	.combo {
		display: flex;
		align-items: center;
		width: 62px;
		height: 22px;
		margin: 0 -5px 0 -1px;
		padding-right: 4px;
		background: #fff;
	}

	.combo select {
		flex: 1;
		width: 50px;
		padding-left: 1px;
		appearance: none;
	}

	.panes {
		display: flex;
		flex: 1;
		gap: 4px;
		min-height: 0;
	}

	.parts {
		display: flex;
		flex-direction: column;
		flex: none;
		width: 183px;
		margin: 5px 0 2px;
		font-family: 'Liberation Serif', 'Noto Sans CJK SC', serif;
	}

	.search {
		display: flex;
		align-items: center;
		gap: 5px;
		height: 26px;
		padding-left: 1px;
		border-right: 1px solid #a0a0a0;
	}

	.search input {
		width: 157px;
		height: 24px;
		padding: 0 2px 4px;
		border: 1px solid #7a7a7a;
		background: #fff;
		font-family: 'Open Sans', 'Noto Sans CJK SC', sans-serif;
	}

	.search input::placeholder {
		color: #757575;
	}

	.part-tree {
		flex: 1;
		padding: 1px 0 0;
		border: 1px solid #828790;
		background: #fff;
	}

	.part-root,
	.part-leaf {
		display: flex;
		height: 16px;
	}

	.part-leaf button {
		display: flex;
		gap: 6px;
		padding: 0 4px 0 1px;
		background: #316ac5;
	}

	.editor {
		display: flex;
		flex-direction: column;
		flex: 1;
		min-width: 0;
		margin: 1px 3px 2px 0;
		padding: 0 2px 2px 4px;
		background: #fff;
		font-family: 'Liberation Serif', 'Noto Sans CJK SC', serif;
	}

	.tabs {
		display: flex;
		height: 21px;
		margin: 0 0 3px -4px;
		border-bottom: 1px solid #dcdcdc;
	}

	.tab {
		height: 21px;
		padding: 0 7px;
		border: 1px solid #dcdcdc;
		border-bottom-color: #fff;
		background: #fff;
	}

	.sheet {
		position: relative;
		flex: 1;
		min-height: 0;
		overflow: hidden;
		padding-top: 1px;
		border: 1px solid #a0a0a0;
	}

	table {
		width: 370px;
		table-layout: fixed;
		border-spacing: 0;
	}

	th,
	td {
		height: 19px;
		padding: 0;
		border: solid #c0c0c0;
		border-width: 0 1px 1px 0;
		font-weight: 400;
		line-height: 16px;
		text-align: left;
	}

	th {
		text-align: center;
		background: linear-gradient(#fafafa, #f0f0f0);
	}

	thead th {
		height: 23px;
	}

	thead .value {
		padding: 0;
		background: linear-gradient(#fad795, #f2c062);
		color: #5a0a5a;
	}

	th.idx {
		width: 22px;
	}

	th.name {
		width: 191px;
	}

	th.value {
		width: 126px;
	}

	.extra {
		text-align: center;
	}

	td.name {
		padding-left: 20px;
	}

	td.value {
		padding-left: 1px;
	}

	.blue {
		color: #0000f0;
	}

	td.gray {
		padding-left: 3px;
		color: #808080;
	}

	.num {
		font-family: 'DejaVu Sans Mono', monospace;
		font-size: 10px;
	}

	.bars {
		display: flex;
		align-items: center;
	}

	.plus {
		width: 12px;
		height: 12px;
		margin-right: 5px;
		border: 1px solid #a0a0a0;
		color: #000;
		line-height: 9px;
	}

	.current .idx {
		background: #ffd58c;
		color: #5a0a5a;
	}

	.current .name {
		background: #0078d7;
		color: #fff;
	}

	.current .value {
		background: #d9ebf9;
	}

	.extra input {
		display: block;
		width: 13px;
		height: 13px;
		margin: 0 auto;
		border: 1px solid #333;
		background: #fff;
		appearance: none;
	}

	.extra input:checked {
		background: #333;
	}

	/* red frame laid over the value column */
	.marker {
		position: absolute;
		top: 7px;
		left: 175px;
		width: 161px;
		height: 189px;
		border: 7px solid #f00;
		pointer-events: none;
	}

	.status {
		display: flex;
		flex: none;
		gap: 2px;
		height: 22px;
		padding: 1px 0;
		font-family: 'Liberation Serif', 'Noto Sans CJK SC', serif;
	}

	.status span {
		padding: 1px;
		border: 1px solid #d4d4d4;
		background: linear-gradient(#fff, #f0f0f0);
	}

	.s-blank {
		width: 148px;
	}

	.s-height {
		width: 78px;
	}

	.s-base {
		width: 98px;
	}

	.s-count {
		width: 48px;
	}

	.s-hint {
		flex: 1;
	}

	.s-fps {
		width: 70px;
	}

	.taskbar {
		display: flex;
		align-items: center;
		flex: none;
		height: 40px;
		background: #05151a;
		color: #fff;
	}

	.taskbar button {
		display: flex;
		align-items: center;
		justify-content: center;
		height: 40px;
	}

	.task-icon {
		width: 24px;
		height: 24px;
	}

	.start {
		width: 48px;
		background: #060a0b;
	}

	.cortana {
		display: flex;
		align-items: center;
		width: 344px;
		height: 40px;
		padding: 0 15px 0 9px;
		background: #f2f2f2;
		color: #333;
	}

	.cortana input {
		flex: 1;
		padding-left: 9px;
		font-size: 14px;
		line-height: 20px;
	}

	.cortana input::placeholder {
		color: #444;
	}

	.pinned {
		width: 51px;
	}

	.pinned.view {
		flex: none;
		width: 48px;
	}

	.pinned .task-icon {
		overflow: visible;
	}

	.grip {
		width: 3px;
		height: 16px;
		margin: 0 12px 0 8px;
		border: solid #3a4a50;
		border-width: 0 1px;
	}

	.grip.last {
		margin: 0 10px 0 14px;
	}

	.running {
		width: 47px;
		border-bottom: 2px solid transparent;
	}

	.running.green {
		border-bottom-color: #76b9ed;
	}

	.running.app {
		min-height: 0;
		border-bottom-color: #76b9ed;
		background: #3d4a51;
	}

	.tray {
		display: flex;
		align-items: center;
		margin-left: auto;
	}

	.t-wide {
		width: 36px;
	}

	.t-wide .task-icon {
		width: 20px;
	}

	.t-more {
		margin-right: 18px;
	}

	.t-item {
		width: 25px;
	}

	.t-ime {
		width: 30px;
		font-size: 18px;
		text-align: center;
	}

	.t-sogou {
		width: 30px;
	}

	.clock {
		display: flex;
		flex-direction: column;
		gap: 3px;
		width: 76px;
		text-align: center;
	}

	.notice {
		position: relative;
		width: 47px;
	}

	.notice b {
		position: absolute;
		right: 12px;
		bottom: 4px;
		width: 17px;
		height: 17px;
		border: 1px solid #888;
		border-radius: 50%;
		background: #333;
		font-size: 11px;
		line-height: 15px;
	}

	.desktop {
		width: 5px;
		height: 40px;
		border-left: 1px solid #566166;
	}

	/* floating widgets over the window */
	.ball {
		position: absolute;
		top: -28px;
		left: 857px;
		width: 46px;
		height: 47px;
		border: 2px solid #c8ccc8;
		border-radius: 50%;
		background: #3dba55;
		box-shadow: 0 1px 4px #999;
		color: #fff;
		font: bold 12px/14px 'DejaVu Sans', sans-serif;
		padding-top: 26px;
		text-align: center;
	}

	.ime {
		position: absolute;
		top: 7px;
		left: 954px;
		display: flex;
		align-items: center;
		justify-content: space-between;
		width: 191px;
		height: 24px;
		padding: 0 4px 0 18px;
		border: 1px solid #a9c8e0;
		background: #fafcff;
	}

	.ime b {
		color: #1e73c8;
		font: bold 18px/20px 'Open Sans', sans-serif;
	}

	.ime-logo {
		position: absolute;
		top: -5px;
		left: -18px;
		width: 30px;
		height: 30px;
	}
</style>
